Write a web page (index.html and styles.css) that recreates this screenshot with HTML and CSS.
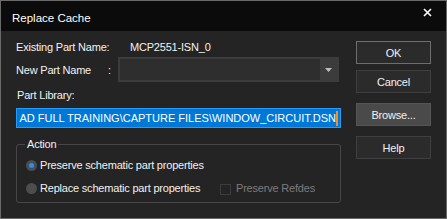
FILE: index.html
```html
<!DOCTYPE html>
<html>
<head>
<meta charset="utf-8">
<link rel="stylesheet" href="styles.css">
</head>
<body>
<div class="window">
  <div class="titlebar">
    <span class="title">Replace Cache</span>
    <svg class="close" width="9" height="9" viewBox="0 0 9 9"><path d="M1 1 L8 8 M8 1 L1 8" stroke="#ffffff" stroke-width="1.6"/></svg>
  </div>
  <div class="content">
    <div class="left">
      <div class="row row-existing">
        <span class="label label-existing">Existing Part Name:</span>
        <span class="value">MCP2551-ISN_0</span>
      </div>
      <div class="row row-new">
        <span class="label label-new">New Part Name</span>
        <span class="colon">:</span>
        <div class="combo">
          <div class="combo-field"></div>
          <svg class="combo-arrow" width="7" height="4" viewBox="0 0 7 4"><path d="M0 0 H7 L3.5 4 Z" fill="#bdbdbd"/></svg>
        </div>
      </div>
      <div class="label-lib">Part Library:</div>
      <div class="lib-field"><span class="lib-text">AD FULL TRAINING\CAPTURE FILES\WINDOW_CIRCUIT.DSN</span><span class="caret"></span></div>
      <div class="group">
        <span class="legend">Action</span>
        <div class="radio-row first">
          <span class="radio checked"></span>
          <span class="opt">Preserve schematic part properties</span>
        </div>
        <div class="radio-row">
          <span class="radio"></span>
          <span class="opt opt-fixed">Replace schematic part properties</span>
          <span class="check"></span>
          <span class="opt disabled">Preserve Refdes</span>
        </div>
      </div>
    </div>
    <div class="right">
      <div class="btn btn-default">OK</div>
      <div class="btn">Cancel</div>
      <div class="btn btn-hover">Browse...</div>
      <div class="btn">Help</div>
    </div>
  </div>
</div>
</body>
</html>
```
FILE: styles.css
```css
html, body {
  margin: 0;
  padding: 0;
  background: #242424;
}
.window {
  width: 445px;
  height: 217px;
  border: 1px solid #6a6a6a;
  background: #242424;
  font-family: "Liberation Sans", Arial, sans-serif;
  font-size: 11px;
  letter-spacing: -0.2px;
  color: #f2f2f2;
  overflow: hidden;
  white-space: nowrap;
}
.titlebar {
  height: 30px;
  background: #0b0b0b;
  display: flex;
  align-items: flex-start;
  justify-content: space-between;
}
.title {
  margin: 11px 0 0 11px;
  font-size: 11.5px;
  letter-spacing: 0;
  color: #ffffff;
}
.close {
  margin: 7px 14px 0 0;
}
.content {
  display: flex;
  padding: 0 0 0 15px;
}
.left {
  width: 326px;
  display: flex;
  flex-direction: column;
}
.row {
  display: flex;
  align-items: center;
}
.row-existing {
  height: 16px;
  margin-top: 8px;
}
.label-existing {
  width: 114px;
}
.row-new {
  margin-top: 2px;
  height: 25px;
}
.label-new {
  width: 92px;
}
.colon {
  width: 10px;
}
.combo {
  width: 221px;
  height: 25px;
  box-sizing: border-box;
  background: #3c3c3c;
  display: flex;
  align-items: center;
  padding: 2px;
}
.combo-field {
  flex: 1;
  height: 21px;
  background: #2e2e2e;
}
.combo-arrow {
  margin: 0 5px 0 5px;
}
.label-lib {
  margin-top: 5px;
  height: 16px;
  line-height: 16px;
  padding-left: 1px;
}
.lib-field {
  margin-top: 5px;
  width: 325px;
  height: 20px;
  box-sizing: border-box;
  border: 1px solid #2b9af3;
  background: #0078d7;
  color: #ffffff;
  display: flex;
  align-items: center;
  justify-content: flex-end;
  overflow: hidden;
  padding-right: 2px;
}
.lib-text {
  letter-spacing: 0;
}
.caret {
  width: 2px;
  height: 15px;
  background: #ff8c1a;
  margin-left: 0;
}
.group {
  position: relative;
  margin-top: 16px;
  padding: 9px 0 0 9px;
  width: 325px;
  height: 59px;
  box-sizing: border-box;
  border: 1px solid #474747;
  border-radius: 3px;
}
.legend {
  position: absolute;
  left: 8px;
  top: -7px;
  padding: 0 2px;
  background: #242424;
  line-height: 12px;
}
.radio-row {
  display: flex;
  align-items: center;
  height: 22px;
}
.radio-row.first {
  margin-bottom: 1px;
}
.radio {
  width: 11px;
  height: 11px;
  border-radius: 50%;
  background: #4d4d4d;
  margin-right: 3px;
  display: flex;
  align-items: center;
  justify-content: center;
}
.radio.checked::after {
  content: "";
  width: 5px;
  height: 5px;
  border-radius: 50%;
  background: #1e90ff;
}
.opt-fixed {
  width: 180px;
}
.check {
  width: 9px;
  height: 9px;
  border: 1px solid #3d3d3d;
  margin: 2px 5px 0 0;
}
.opt.disabled {
  color: #7c7c7c;
}
.right {
  display: flex;
  flex-direction: column;
  margin-left: 14px;
  padding-top: 10px;
}
.btn {
  width: 75px;
  height: 23px;
  box-sizing: border-box;
  border: 1px solid #3f3f3f;
  background: #2b2b2b;
  display: flex;
  align-items: center;
  justify-content: center;
  margin-bottom: 10px;
}
.btn-default {
  border-color: #6e6e6e;
  margin-bottom: 6px;
}
.btn-hover {
  background: #4a4a4a;
  border-color: #555555;
}
```
